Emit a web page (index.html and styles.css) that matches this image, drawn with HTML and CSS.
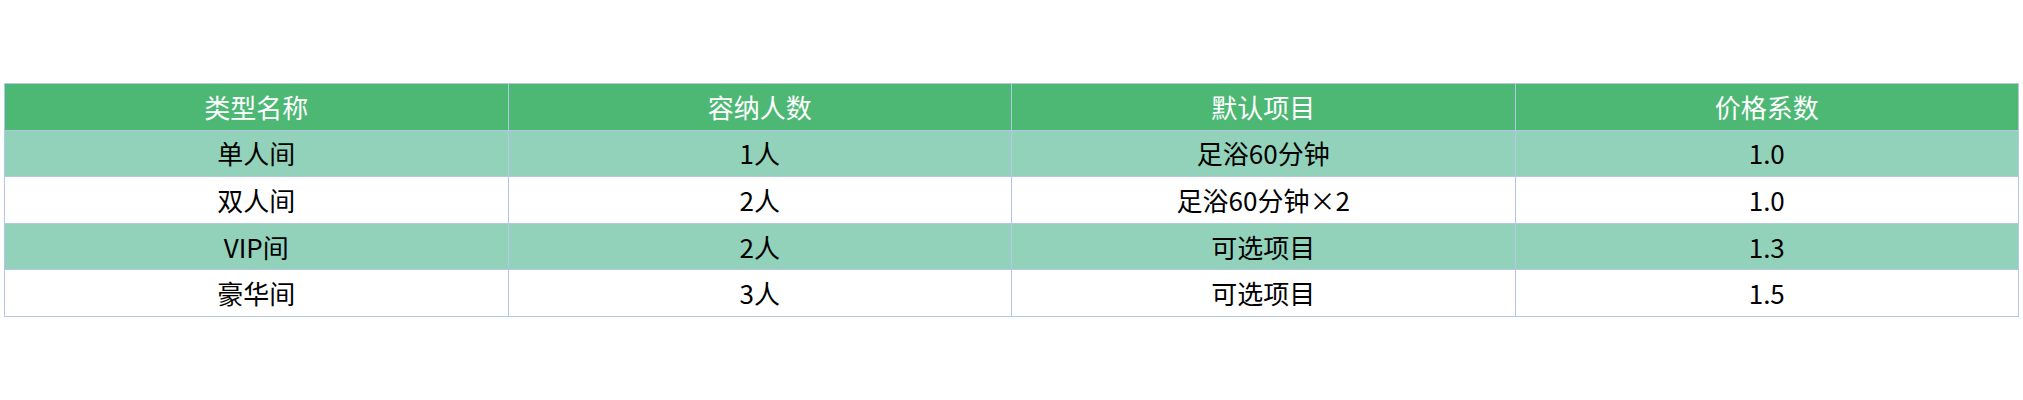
FILE: index.html
```html
<!DOCTYPE html>
<html lang="zh">
<head>
<meta charset="utf-8">
<link rel="stylesheet" href="styles.css">
</head>
<body>
<div class="wrap">
<table class="grid">
<thead>
<tr><th>类型名称</th><th>容纳人数</th><th>默认项目</th><th>价格系数</th></tr>
</thead>
<tbody>
<tr class="alt"><td>单人间</td><td>1人</td><td>足浴60分钟</td><td>1.0</td></tr>
<tr><td>双人间</td><td>2人</td><td>足浴60分钟×2</td><td>1.0</td></tr>
<tr class="alt"><td>VIP间</td><td>2人</td><td>可选项目</td><td>1.3</td></tr>
<tr><td>豪华间</td><td>3人</td><td>可选项目</td><td>1.5</td></tr>
</tbody>
</table>
</div>
</body>
</html>
```
FILE: styles.css
```css
html, body {
  margin: 0;
  padding: 0;
  background: #ffffff;
}
.wrap {
  padding: 83px 4px 0 4px;
}
.grid {
  width: 100%;
  border-collapse: collapse;
  table-layout: fixed;
  font-family: "Noto Sans CJK SC", "Noto Sans", sans-serif;
  font-size: 26px;
  color: #000000;
}
.grid th,
.grid td {
  border: 1px solid #b4c7e7;
  text-align: center;
  vertical-align: middle;
  padding: 0;
  height: 45.6px;
  line-height: 30px;
  font-weight: normal;
}
.grid th {
  background: #4cb874;
  color: #ffffff;
}
.grid tr.alt td {
  background: #92d2bb;
}
```
